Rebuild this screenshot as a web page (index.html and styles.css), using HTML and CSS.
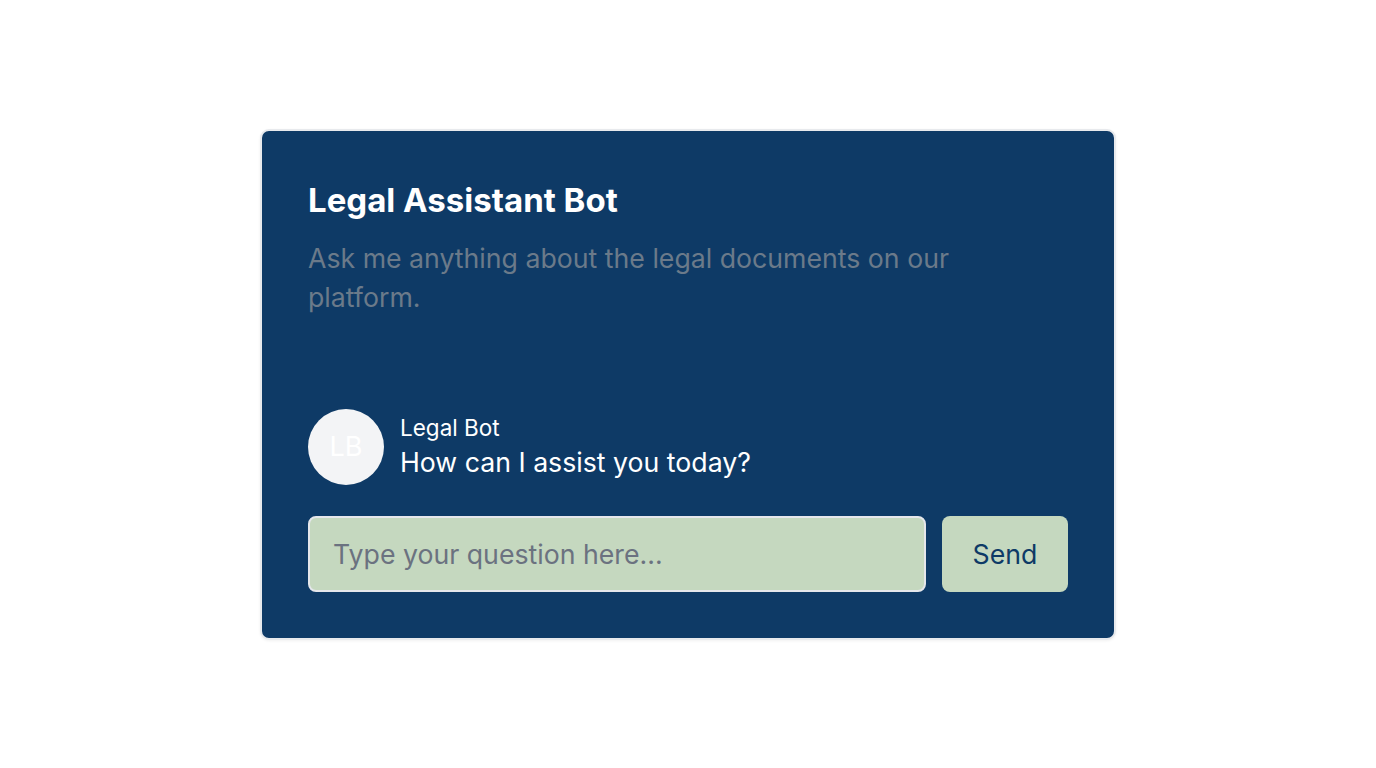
FILE: index.html
```html
<!DOCTYPE html>
<html lang="en">
<head>
<meta charset="utf-8">
<title>Legal Assistant Bot</title>
<link rel="stylesheet" href="styles.css">
</head>
<body>
<div class="card">
  <h1 class="title">Legal Assistant Bot</h1>
  <p class="subtitle">Ask me anything about the legal documents on our platform.</p>
  <div class="messages">
    <div class="message">
      <div class="avatar">LB</div>
      <div class="message-body">
        <div class="sender">Legal Bot</div>
        <div class="text">How can I assist you today?</div>
      </div>
    </div>
  </div>
  <form class="composer">
    <input class="input" type="text" placeholder="Type your question here...">
    <button class="send" type="button">Send</button>
  </form>
</div>
</body>
</html>
```
FILE: styles.css
```css
* { box-sizing: border-box; }
html, body { margin: 0; padding: 0; }
body {
  min-height: 100vh;
  display: flex;
  align-items: center;
  justify-content: center;
  background: #ffffff;
  font-family: Inter, "Noto Sans", sans-serif;
}
.card {
  width: 856px;
  background: #0e3a66;
  border: 2px solid #e8eaed;
  border-radius: 9px;
  padding: 45px 46px 46px;
  display: flex;
  flex-direction: column;
  box-shadow: 0 1px 3px rgba(0, 0, 0, 0.06);
}
.title {
  margin: 0;
  font-size: 33px;
  line-height: 48px;
  font-weight: 700;
  color: #ffffff;
}
.subtitle {
  margin: 15px 0 0;
  max-width: 672px;
  font-size: 26.7px;
  line-height: 39px;
  color: #6b7a8a;
}
.messages {
  margin-top: 92px;
  display: flex;
  flex-direction: column;
}
.message {
  display: flex;
  align-items: center;
  gap: 16px;
}
.avatar {
  width: 76px;
  height: 76px;
  border-radius: 50%;
  background: #f3f4f6;
  color: #ffffff;
  display: flex;
  align-items: center;
  justify-content: center;
  font-size: 27px;
  flex: none;
}
.message-body { display: flex; flex-direction: column; }
.sender {
  font-size: 22.5px;
  line-height: 30px;
  color: #ffffff;
}
.text {
  font-size: 26.7px;
  line-height: 38px;
  color: #ffffff;
}
.composer {
  margin: 31px 0 0;
  display: flex;
  gap: 16px;
}
.input {
  flex: 1;
  height: 76px;
  background: #c5d8bf;
  border: 2px solid #e5e7eb;
  border-radius: 8px;
  padding: 0 23px;
  font-family: inherit;
  font-size: 26.7px;
  color: #374151;
  outline: none;
}
.input::placeholder { color: #6b7280; }
.send {
  width: 126px;
  height: 76px;
  background: #c5d8bf;
  border: none;
  border-radius: 8px;
  font-family: inherit;
  font-size: 26.7px;
  color: #0e3a66;
  cursor: pointer;
}
```
